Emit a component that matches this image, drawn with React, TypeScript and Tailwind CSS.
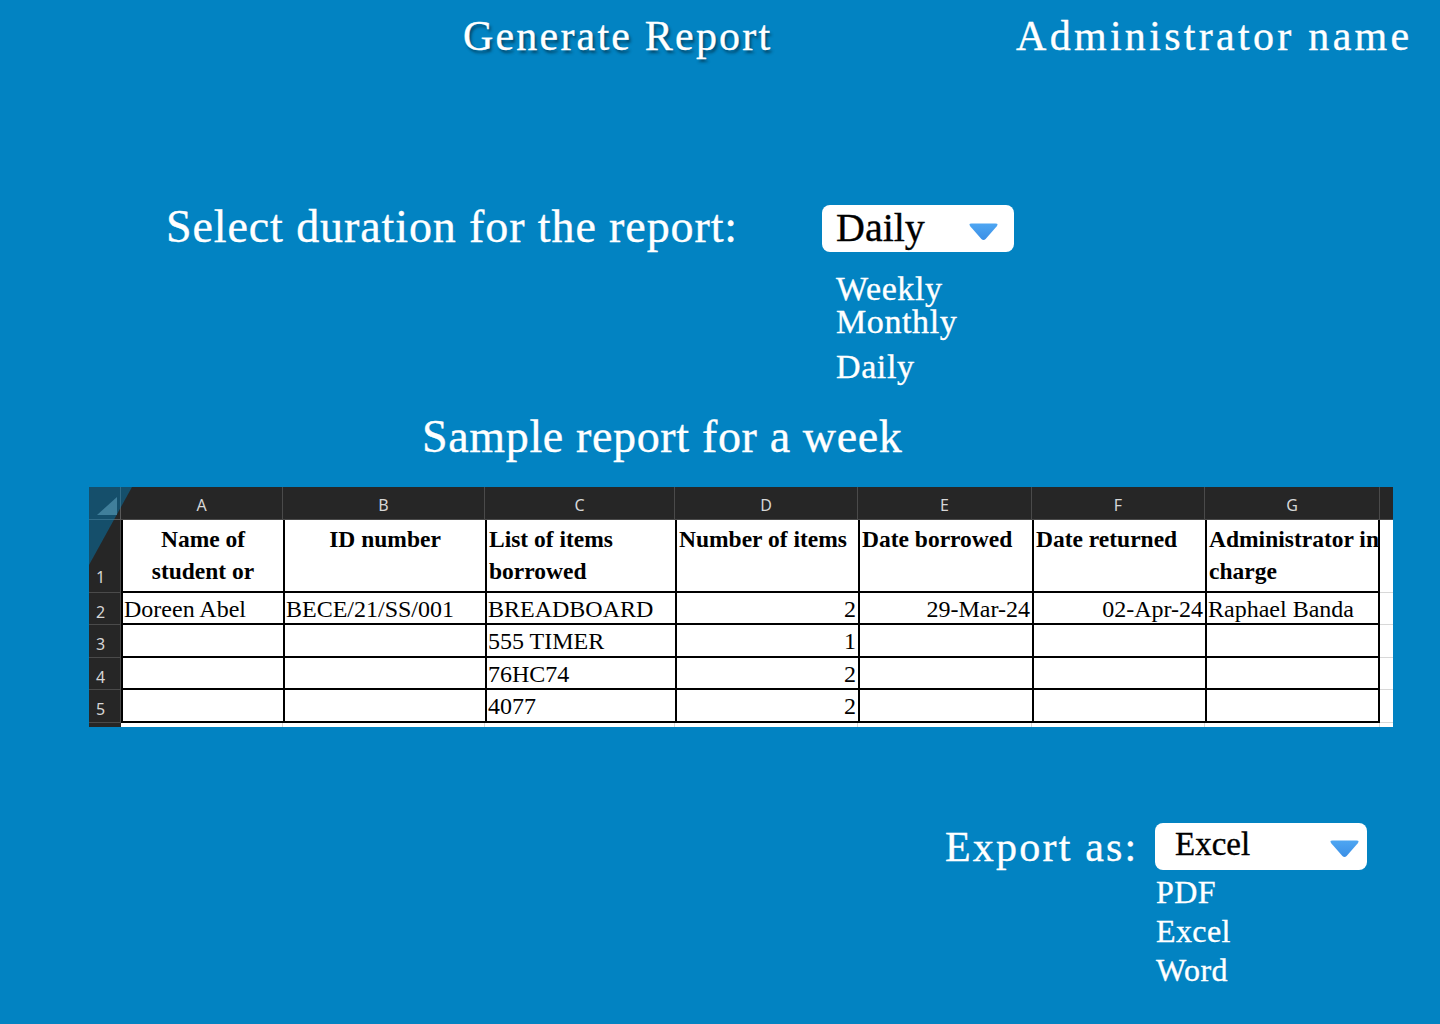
import React from "react";

const Caret = ({ id }: { id: string }) => (
  <svg width="31" height="18" viewBox="0 0 31 18" className="shrink-0">
    <defs>
      <linearGradient id={id} x1="0" y1="0" x2="0" y2="1">
        <stop offset="0" stopColor="#4ea6f2" />
        <stop offset="1" stopColor="#3b8fe6" />
      </linearGradient>
    </defs>
    <path
      d="M3.5 0.5 H27.5 Q31 0.5 28.6 3.4 L17.6 16 Q15.5 18.2 13.4 16 L2.4 3.4 Q0 0.5 3.5 0.5 Z"
      fill={`url(#${id})`}
    />
  </svg>
);

const cols = ["A", "B", "C", "D", "E", "F", "G"];

type Cell = { t?: React.ReactNode; align?: "l" | "r" | "c" };

const rows: Cell[][] = [
  [
    { t: "Doreen Abel" },
    { t: "BECE/21/SS/001" },
    { t: "BREADBOARD" },
    { t: "2", align: "r" },
    { t: "29-Mar-24", align: "r" },
    { t: "02-Apr-24", align: "r" },
    { t: "Raphael Banda" },
  ],
  [{}, {}, { t: "555 TIMER" }, { t: "1", align: "r" }, {}, {}, {}],
  [{}, {}, { t: "76HC74" }, { t: "2", align: "r" }, {}, {}, {}],
  [{}, {}, { t: "4077" }, { t: "2", align: "r" }, {}, {}, {}],
];

const headers: { lines: string[]; center?: boolean }[] = [
  { lines: ["Name of", "student or"], center: true },
  { lines: ["ID number"], center: true },
  { lines: ["List of items", "borrowed"] },
  { lines: ["Number of items"] },
  { lines: ["Date borrowed"] },
  { lines: ["Date returned"] },
  { lines: ["Administrator in", "charge"] },
];

const rowNumPad = ["pb-[5px]", "pb-[2px]", "pb-[3px]", "pb-[2px]", "pb-[3px]"];

function Sheet() {
  return (
    <div className="relative ml-[89px] w-[1304px] grid grid-cols-[32px_162px_202px_190px_183px_174px_173px_175px_13px] grid-rows-[33px_73px_32px_33px_32px_33px_4px] bg-white font-['Liberation_Serif',serif] text-black">
      {/* column header row */}
      <div className="bg-[#262626] border-r border-b border-[#5a5a5a]" />
      {cols.map((c) => (
        <div
          key={c}
          className="bg-[#262626] border-r border-b border-[#4a4a4a] flex justify-center pt-[8px] font-['Noto_Sans',sans-serif] text-[16px] leading-[20px] text-[#d6d6d6]"
        >
          {c}
        </div>
      ))}
      <div className="bg-[#262626] border-b border-[#4a4a4a]" />

      {/* row 1 header */}
      <div className={`bg-[#262626] border-r border-b border-[#4a4a4a] flex items-end pl-[7px] ${rowNumPad[0]} font-['Noto_Sans',sans-serif] text-[16px] leading-[20px] text-[#d6d6d6]`}>
        1
      </div>
      {headers.map((h, i) => (
        <div
          key={i}
          className={`border-l-2 border-b-2 border-black ${i === 6 ? "border-r-2" : ""} overflow-hidden pt-[3px] text-[23.5px] leading-[32px] font-bold whitespace-nowrap ${
            h.center ? "text-center" : "pl-[2px]"
          }`}
        >
          {h.lines.map((l, k) => (
            <div key={k}>{l}</div>
          ))}
        </div>
      ))}
      <div className="border-b border-[#d8d8d8]" />

      {rows.map((r, ri) => (
        <React.Fragment key={ri}>
          <div
            className={`bg-[#262626] border-r border-b border-[#4a4a4a] flex items-end pl-[7px] ${rowNumPad[ri + 1]} font-['Noto_Sans',sans-serif] text-[16px] leading-[20px] text-[#d6d6d6]`}
          >
            {ri + 2}
          </div>
          {r.map((c, ci) => (
            <div
              key={ci}
              className={`border-l-2 border-b-2 border-black ${ci === 6 ? "border-r-2" : ""} overflow-hidden whitespace-nowrap pt-[1px] text-[24px] leading-[30px] ${
                c.align === "r" ? "text-right pr-[2px]" : "pl-[1px]"
              }`}
            >
              {c.t}
            </div>
          ))}
          <div className="border-b border-[#d8d8d8]" />
        </React.Fragment>
      ))}

      {/* bottom strip */}
      <div className="bg-[#262626]" />
      {cols.map((c) => (
        <div key={c} className="border-r border-[#d8d8d8]" />
      ))}
      <div />

      {/* corner overlay */}
      <svg
        className="absolute left-0 top-0 pointer-events-none"
        width="44"
        height="80"
        viewBox="0 0 44 80"
      >
        <polygon points="0,0 43,0 0,78" fill="#0283c2" fillOpacity="0.45" />
        <polygon points="8,28 28,10 28,28" fill="#4f8fab" fillOpacity="0.75" />
      </svg>
    </div>
  );
}

export default function App() {
  return (
    <div className="w-[1440px] h-[1024px] overflow-hidden bg-[#0283c2] text-white font-['Liberation_Serif',serif] [-webkit-text-stroke:0.35px_white]">
      {/* top bar */}
      <div className="flex pt-[12px]">
        <div className="ml-[463px] w-[553px] text-[42px] leading-[48px] tracking-[2.2px] [text-shadow:2px_3px_3px_rgba(0,0,0,0.45)]">
          Generate Report
        </div>
        <div className="text-[42px] leading-[48px] tracking-[3.3px]">Administrator name</div>
      </div>

      {/* duration */}
      <div className="flex items-start mt-[142px]">
        <div className="ml-[166px] w-[656px] text-[46px] leading-[52px] tracking-[0.9px] -mt-[1px]">
          Select duration for the report:
        </div>
        <div className="flex flex-col">
          <div className="mt-[3px] w-[192px] h-[47px] rounded-[8px] bg-white flex items-start pl-[14px] pr-[15px] [-webkit-text-stroke:0.35px_black]">
            <span className="text-black text-[40px] leading-[46px]">Daily</span>
            <span className="ml-auto mt-[18px]">
              <Caret id="g1" />
            </span>
          </div>
          <div className="pl-[14px] mt-[20px] text-[34px] leading-[33px] tracking-[0.6px]">
            <div>Weekly</div>
            <div>Monthly</div>
            <div className="mt-[12px]">Daily</div>
          </div>
        </div>
      </div>

      {/* sample heading */}
      <div className="mt-[28px] ml-[422px] text-[46px] leading-[52px] tracking-[0.65px]">
        Sample report for a week
      </div>

      <div className="mt-[24px] [-webkit-text-stroke:0px]">
        <Sheet />
      </div>

      {/* export */}
      <div className="flex items-start mt-[96px]">
        <div className="ml-[945px] w-[210px] text-[42px] leading-[48px] tracking-[2.2px]">Export as:</div>
        <div className="flex flex-col">
          <div className="w-[212px] h-[47px] rounded-[8px] bg-white flex items-start pl-[20px] pr-[7px] [-webkit-text-stroke:0.35px_black]">
            <span className="text-black text-[33px] leading-[42px]">Excel</span>
            <span className="ml-auto mt-[17px]">
              <Caret id="g2" />
            </span>
          </div>
          <div className="pl-[1px] mt-[2px] text-[32px] leading-[40px] tracking-[0.4px]">
            <div>PDF</div>
            <div className="-mt-[1px]">Excel</div>
            <div className="-mt-[1px]">Word</div>
          </div>
        </div>
      </div>
    </div>
  );
}
